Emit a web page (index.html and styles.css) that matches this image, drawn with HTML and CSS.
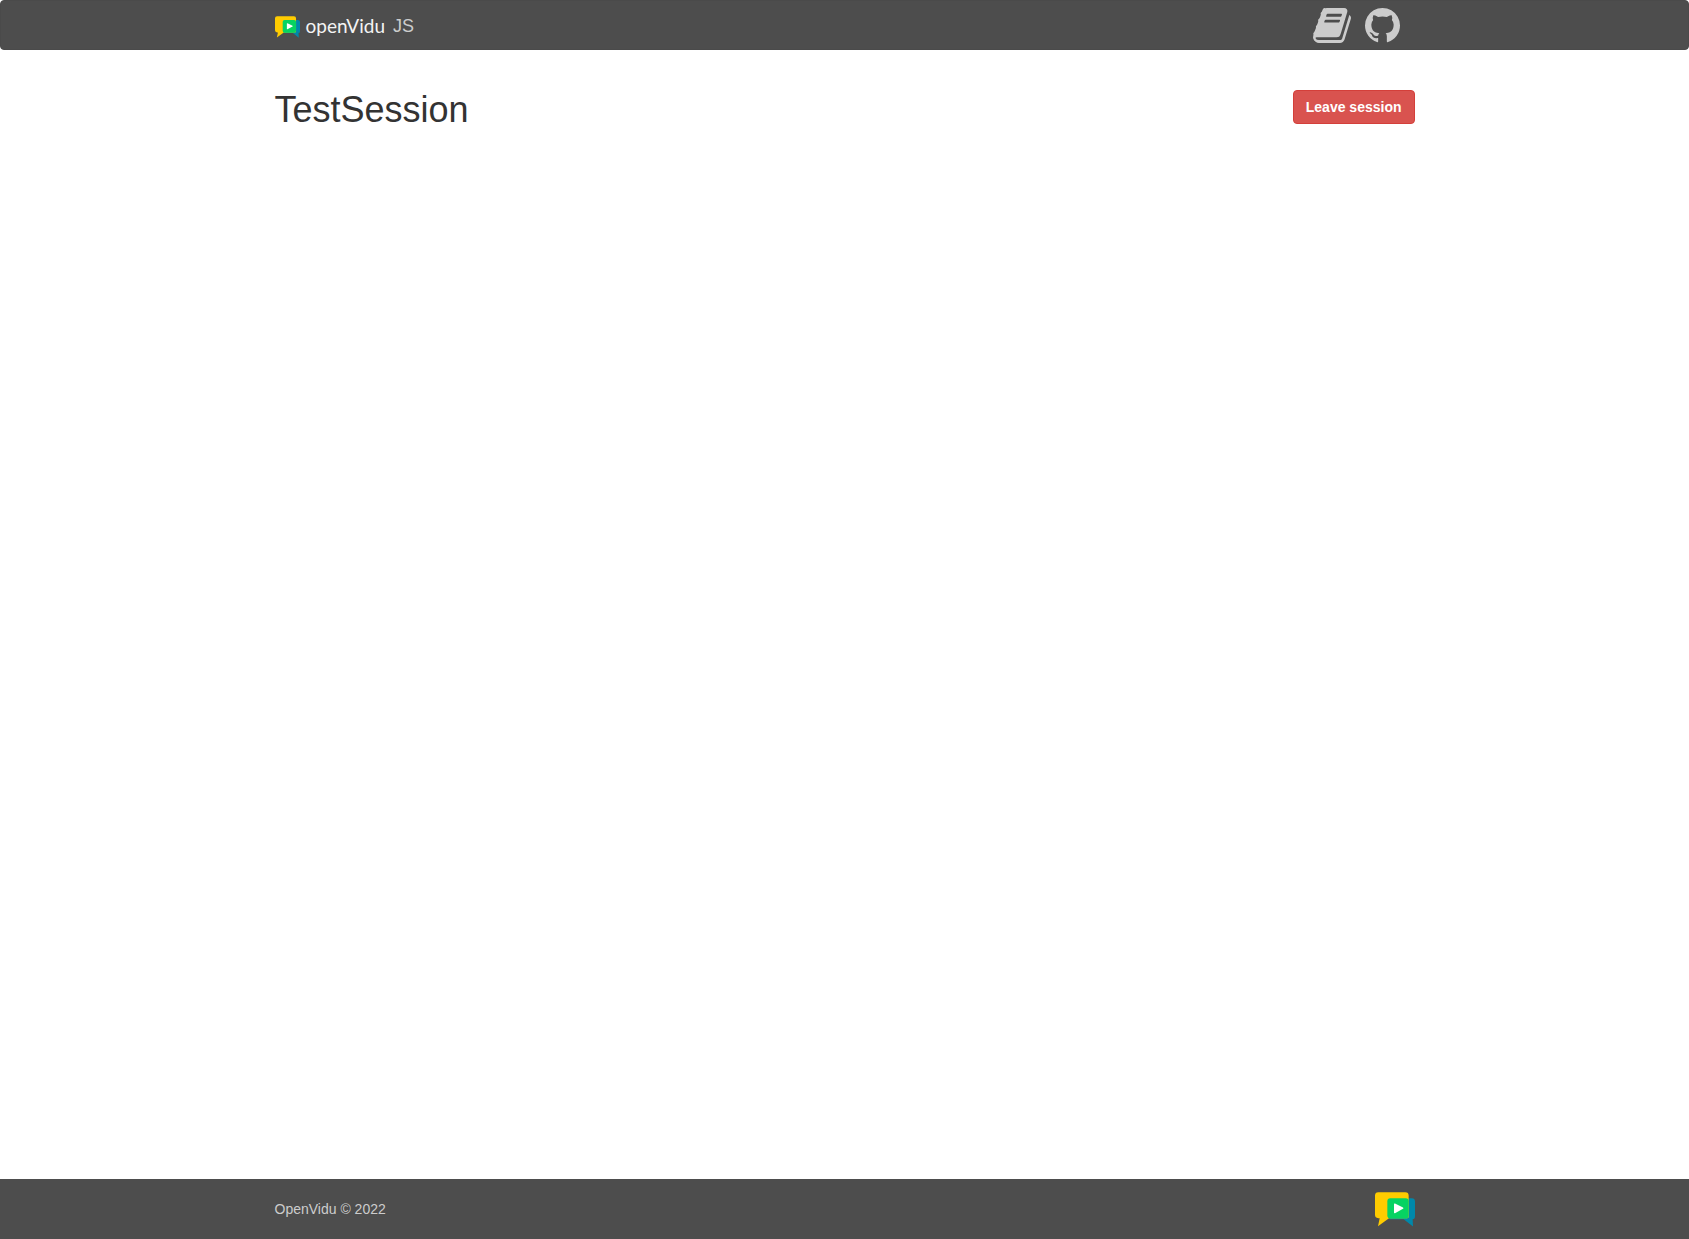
FILE: index.html
```html
<!DOCTYPE html>
<html lang="en">
<head>
<meta charset="utf-8">
<meta name="viewport" content="width=device-width, initial-scale=1">
<title>openVidu JS</title>
<link rel="stylesheet" href="styles.css">
</head>
<body>
<svg class="symbols" aria-hidden="true">
  <symbol id="bubbles" viewBox="0 0 120 104">
    <path fill="#0088aa" d="M44 18h66q10 0 10 10v44q0 9-7 9l1 22-28-22H44z"/>
    <path fill="#ffcc00" d="M10 0h81q10 0 10 10v64q0 4-4 4H42L9 102l5-24H10q-10 0-10-10V10q0-10 10-10z"/>
    <rect x="37" y="18" width="64" height="61" rx="9" fill="#06d362"/>
    <path fill="#fff" d="M57 36q0-3 3-2l24 12q3 2 0 4L60 63q-3 1-3-2z"/>
  </symbol>
</svg>
<nav class="navbar">
  <div class="container">
    <a class="brand" href="#">
      <svg class="brand-mark" aria-hidden="true"><use href="#bubbles"/></svg>
      <span class="brand-name">openVidu</span>
      <span class="brand-kind">JS</span>
    </a>
    <div class="nav-links">
      <a class="nav-icon" href="#" aria-label="Documentation">
        <svg width="38" height="35" viewBox="0 128 1664 1536" aria-hidden="true"><path d="M1639 478q40 57 18 129l-275 906q-19 64-76.500 107.500t-122.500 43.500h-923q-77 0-148.500-53.500t-99.500-131.500q-24-67-2-127 0-4 3-27t4-37q1-8-3-21.500t-3-19.500q2-11 8-21t16.500-23.500 16.500-23.500q23-38 45-91.500t30-91.500q3-10 .5-30t-.5-28q3-11 17-28t17-23q21-36 42-92t25-90q1-9-2.500-32t.5-28q4-13 22-30.500t22-22.500q19-26 42.500-84.500t27.500-96.500q1-8-3-25.500t-2-26.500q2-8 9-18t18-23 17-21q8-12 16.500-30.500t15-35 16-36 19.500-32 26.500-23.500 36-11.500 47.500 5.500l-1 3q38-9 51-9h761q74 0 114 56t18 130l-274 906q-36 119-71.500 153.500t-128.500 34.500h-869q-27 0-38 15-11 16-1 43 24 70 144 70h923q29 0 56-15.500t35-41.500l300-987q7-22 5-57 38 15 59 43zm-1064 2q-4 13 2 22.500t20 9.500h608q13 0 25.500-9.500t16.500-22.500l21-64q4-13-2-22.500t-20-9.500h-608q-13 0-25.500 9.500t-16.500 22.500zm-83 256q-4 13 2 22.500t20 9.500h608q13 0 25.500-9.500t16.500-22.500l21-64q4-13-2-22.500t-20-9.500h-608q-13 0-25.500 9.500t-16.500 22.500z"/></svg>
      </a>
      <a class="nav-icon" href="#" aria-label="GitHub repository">
        <svg width="35" height="35" viewBox="128 128 1536 1536" aria-hidden="true"><path d="M896 128q209 0 385.500 103t279.500 279.500 103 385.500q0 251-146.500 451.500t-378.500 277.500q-27 5-40-7t-13-30q0-3 .5-76.500t.5-134.500q0-97-52-142 57-6 102.500-18t94-39 81-66.500 53-105 20.500-150.500q0-119-79-206 37-91-8-204-28-9-81 11t-92 44l-38 24q-93-26-192-26t-192 26q-16-11-42.500-27t-83.500-38.500-85-13.500q-45 113-8 204-79 87-79 206 0 85 20.500 150t52.500 105 80.500 67 94 39 102.500 18q-39 36-49 103-21 10-45 15t-57 5-65.500-21.500-55.500-62.500q-19-32-48.500-52t-49.500-24l-20-3q-21 0-29 4.500t-5 11.500 9 14 13 12l7 5q22 10 43.500 38t31.500 51l10 23q13 38 44 61.500t67 30 69.500 7 55.500-3.500l23-4q0 38 .5 88.500t.5 54.500q0 18-13 30t-40 7q-232-77-378.500-277.500t-146.500-451.500q0-209 103-385.500t279.500-279.500 385.500-103z"/></svg>
      </a>
    </div>
  </div>
</nav>
<main class="session">
  <div class="container session-header">
    <h1 class="session-title">TestSession</h1>
    <button class="leave" type="button">Leave session</button>
  </div>
</main>
<footer class="footer">
  <div class="container">
    <span>OpenVidu © 2022</span>
    <a class="footer-link" href="#" aria-label="OpenVidu"><svg class="footer-mark" aria-hidden="true"><use href="#bubbles"/></svg></a>
  </div>
</footer>
</body>
</html>
```
FILE: styles.css
```css
* { box-sizing: border-box; }

body {
  margin: 0;
  min-height: 100vh;
  display: flex;
  flex-direction: column;
  background: #fff;
  color: #333;
  font: 14px/20px "Liberation Sans", Arial, sans-serif;
}

.symbols {
  position: absolute;
  width: 0;
  height: 0;
}

.container {
  width: 100%;
  max-width: 1170px;
  margin: 0 auto;
  padding: 0 15px;
  display: flex;
  align-items: center;
  justify-content: space-between;
}

.navbar {
  display: flex;
  min-height: 50px;
  background: #4d4d4d;
  border: 1px solid #4a4a4a;
  border-radius: 4px;
}

.brand {
  display: flex;
  align-items: center;
  padding-top: 2px;
  color: #ccc;
  text-decoration: none;
}

.brand-mark {
  width: 25px;
  height: 22px;
  margin: 2px 6px 0 0;
}

.brand-name {
  margin-right: 8px;
  color: #f4f4f4;
  font: 19px/24px Lato, sans-serif;
}

.brand-kind { font-size: 18px; }

.nav-links {
  display: flex;
  gap: 14px;
  padding-right: 15px;
}

.nav-icon {
  display: block;
  height: 35px;
  fill: #ccc;
}

.nav-icon svg { display: block; }

.session {
  flex: 1;
  padding-top: 40px;
}

.session-header { align-items: flex-start; }

.session-title {
  margin: 0;
  font-size: 36px;
  font-weight: 400;
  line-height: 40px;
}

.leave {
  padding: 6px 12px;
  border: 1px solid #d43f3a;
  border-radius: 4px;
  background: #d9534f;
  color: #fff;
  font: bold 14px/20px "Liberation Sans", Arial, sans-serif;
  cursor: pointer;
}

.footer {
  display: flex;
  min-height: 60px;
  background: #4d4d4d;
  color: #ccc;
}

.footer-link { display: block; }

.footer-mark {
  display: block;
  width: 40px;
  height: 35px;
}
```
